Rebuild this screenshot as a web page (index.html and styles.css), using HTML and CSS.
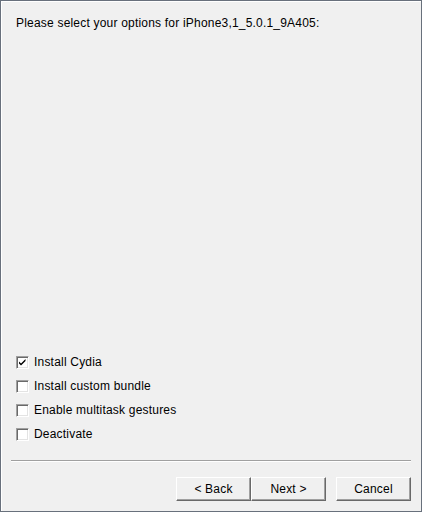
FILE: index.html
```html
<!DOCTYPE html>
<html>
<head>
<meta charset="utf-8">
<link rel="stylesheet" href="styles.css">
</head>
<body>
<div class="window">
  <div class="content">
    <p class="prompt">Please select your options for iPhone3,1_5.0.1_9A405:</p>
    <div class="options">
      <label class="opt"><span class="box"><svg width="11" height="11" viewBox="0 0 11 11"><path d="M2 4.5 L4 6.5 L8.5 2 L8.5 4 L4 8.5 L2 6.5 Z" fill="#000"/></svg></span>Install Cydia</label>
      <label class="opt"><span class="box"></span>Install custom bundle</label>
      <label class="opt"><span class="box"></span>Enable multitask gestures</label>
      <label class="opt"><span class="box"></span>Deactivate</label>
    </div>
  </div>
  <div class="sep"></div>
  <div class="buttons">
    <button class="btn">&lt; Back</button>
    <button class="btn">Next &gt;</button>
    <button class="btn cancel">Cancel</button>
  </div>
</div>
</body>
</html>
```
FILE: styles.css
```css
html, body {
  margin: 0;
  padding: 0;
  background: #f0f0f0;
}
.window {
  box-sizing: border-box;
  width: 422px;
  height: 512px;
  border: 1px solid #68707c;
  box-shadow: inset 1px 1px 0 #ffffff;
  background: #f0f0f0;
  font-family: "Liberation Sans", Arial, sans-serif;
  font-size: 12px;
  letter-spacing: 0.2px;
  color: #000;
  display: flex;
  flex-direction: column;
}
.content {
  flex: 1;
  display: flex;
  flex-direction: column;
  justify-content: space-between;
  padding: 0 0 0 15px;
}
.prompt {
  margin: 15px 0 0 0;
  line-height: 14px;
}
.options {
  display: flex;
  flex-direction: column;
  gap: 10px;
  padding-bottom: 19px;
}
.opt {
  display: flex;
  align-items: center;
  height: 14px;
  line-height: 14px;
}
.box {
  box-sizing: border-box;
  width: 13px;
  height: 13px;
  margin-right: 5px;
  background: #fff;
  border-top: 1px solid #a0a0a0;
  border-left: 1px solid #a0a0a0;
  border-right: 1px solid #fff;
  border-bottom: 1px solid #fff;
  box-shadow: inset 1px 1px 0 #696969, inset -1px -1px 0 #e3e3e3;
  display: flex;
  align-items: center;
  justify-content: center;
}
.box svg {
  display: block;
}
.sep {
  margin: 0 10px 0 10px;
  height: 1px;
  background: #a0a0a0;
  border-bottom: 1px solid #fff;
}
.buttons {
  display: flex;
  justify-content: flex-end;
  padding: 15px 10px 10px 0;
}
.btn {
  box-sizing: border-box;
  width: 75px;
  height: 24px;
  font-family: "Liberation Sans", Arial, sans-serif;
  font-size: 12px;
  letter-spacing: 0.2px;
  color: #000;
  background: #f0f0f0;
  border-top: 1px solid #fff;
  border-left: 1px solid #fff;
  border-right: 1px solid #696969;
  border-bottom: 1px solid #696969;
  box-shadow: inset -1px -1px 0 #a0a0a0;
  padding: 0;
}
.cancel {
  margin-left: 10px;
}
```
